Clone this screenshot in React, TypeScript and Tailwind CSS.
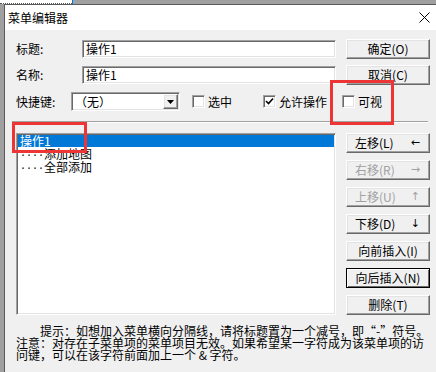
import React from 'react';

const sunken =
  'border border-t-[#a0a0a0] border-l-[#a0a0a0] border-b-white border-r-white shadow-[inset_1px_1px_0_#696969,inset_-1px_-1px_0_#e3e3e3]';
const raised =
  'border border-t-white border-l-white border-b-[#696969] border-r-[#696969] shadow-[inset_-1px_-1px_0_#a0a0a0,inset_1px_1px_0_#e3e3e3]';

function Button({
  label,
  arrow,
  disabled = false,
  focused = false,
}: {
  label: string;
  arrow?: string;
  disabled?: boolean;
  focused?: boolean;
}) {
  return (
    <div
      className={`h-[20px] w-[84px] flex items-center bg-[#f0f0f0] ${
        focused ? 'border border-black shadow-[inset_1px_1px_0_white,inset_-1px_-1px_0_#696969]' : raised
      } ${arrow ? 'justify-between pl-[8px] pr-[9px]' : 'justify-center'} ${
        disabled ? 'text-[#a0a0a0]' : 'text-black'
      }`}
    >
      <span>{label}</span>
      {arrow && <span className="font-['DejaVu_Sans',sans-serif] text-[11px]">{arrow}</span>}
    </div>
  );
}

function CheckBox({ label, checked = false }: { label: string; checked?: boolean }) {
  return (
    <div className="flex items-center gap-[3px]">
      <div className={`w-[13px] h-[13px] bg-white flex items-center justify-center ${sunken}`}>
        {checked && (
          <svg width="9" height="9" viewBox="0 0 9 9">
            <path d="M1 4 L3.5 6.5 L8 1.5" stroke="#000" strokeWidth="1.6" fill="none" />
          </svg>
        )}
      </div>
      <span>{label}</span>
    </div>
  );
}

export default function App() {
  return (
    <div className="relative w-[436px] h-[372px] overflow-hidden bg-[#a0a0a0] text-[12px] leading-[14px] text-black font-['Noto_Sans_CJK_SC',sans-serif]">
      {/* desktop strip above the dialog */}
      <div className="h-[4px] flex">
        <div className="w-[72px] bg-white border-b border-dotted border-[#555]" />
        <div className="w-[1px] bg-[#0078d7]" />
      </div>

      <div className="flex">
        <div className="w-[4px]" />
        <div className="flex-1 h-[368px] flex flex-col bg-[#f0f0f0] border-l border-t border-[#5a5a5a]">
          {/* title bar */}
          <div className="h-[25px] bg-white flex items-center justify-between pl-[3px] pr-[6px]">
            <span className="text-[12px]">菜单编辑器</span>
            <svg width="11" height="11" viewBox="0 0 11 11">
              <path d="M0.5 0.5 L10.5 10.5 M10.5 0.5 L0.5 10.5" stroke="#000" strokeWidth="1" />
            </svg>
          </div>

          <div className="pl-[11px] pr-[6px] pt-[9px]">
            {/* title */}
            <div className="flex items-center h-[20px]">
              <span className="w-[66px]">标题:</span>
              <div className={`w-[254px] h-[18px] bg-white flex items-center pl-[3px] ${sunken}`}>操作1</div>
              <div className="ml-[10px]">
                <Button label="确定(O)" />
              </div>
            </div>

            {/* name */}
            <div className="flex items-center h-[20px] mt-[6px]">
              <span className="w-[66px]">名称:</span>
              <div className={`w-[254px] h-[18px] bg-white flex items-center pl-[3px] ${sunken}`}>操作1</div>
              <div className="ml-[10px]">
                <Button label="取消(C)" />
              </div>
            </div>

            {/* shortcut + flags */}
            <div className="flex items-center h-[19px] mt-[7px]">
              <span className="w-[55px]">快捷键:</span>
              <div className={`w-[109px] h-[19px] bg-white flex items-center justify-between pl-[3px] pr-[1px] ${sunken}`}>
                <span>（无）</span>
                <div className={`w-[15px] h-[15px] bg-[#f0f0f0] flex items-center justify-center ${raised}`}>
                  <svg width="7" height="4" viewBox="0 0 7 4">
                    <path d="M0 0 H7 L3.5 4 Z" fill="#000" />
                  </svg>
                </div>
              </div>
              <div className="ml-[12px]">
                <CheckBox label="选中" />
              </div>
              <div className="ml-[31px]">
                <CheckBox label="允许操作" checked />
              </div>
              <div className="ml-[15px]">
                <CheckBox label="可视" />
              </div>
            </div>

            {/* separator */}
            <div className="mt-[10px] -ml-[4px] w-[416px] border-t border-[#a0a0a0] border-b border-b-white" />

            {/* list + buttons */}
            <div className="flex mt-[10px]">
              <div className={`w-[320px] h-[182px] bg-white pt-[1px] pl-[1px] pr-[1px] ${sunken}`}>
                <div className="h-[12px] leading-[12px] bg-[#0078d7] text-white pl-[2px]">操作1</div>
                <div className="h-[13px] leading-[13px] pl-[2px] flex items-center">
                  <span className="w-[24px] text-black font-['Liberation_Mono',monospace] text-[10px]">....</span>
                  <span>添加地图</span>
                </div>
                <div className="h-[13px] leading-[13px] pl-[2px] flex items-center">
                  <span className="w-[24px] text-black font-['Liberation_Mono',monospace] text-[10px]">....</span>
                  <span>全部添加</span>
                </div>
              </div>
              <div className="ml-[10px] flex flex-col gap-[7px]">
                <Button label="左移(L)" arrow="←" />
                <Button label="右移(R)" arrow="→" disabled />
                <Button label="上移(U)" arrow="↑" disabled />
                <Button label="下移(D)" arrow="↓" />
                <Button label="向前插入(I)" />
                <Button label="向后插入(N)" focused />
                <Button label="删除(T)" />
              </div>
            </div>

            {/* hint */}
            <div className="mt-[10px] leading-[12px] whitespace-nowrap">
              <div className="pl-[24px]">提示：如想加入菜单横向分隔线，请将标题置为一个减号，即“-”符号。</div>
              <div>注意：对存在子菜单项的菜单项目无效。如果希望某一字符成为该菜单项的访</div>
              <div>问键，可以在该字符前面加上一个 &amp; 字符。</div>
            </div>
          </div>
        </div>
      </div>

      {/* red annotation boxes */}
      <div className="absolute left-[12px] top-[122px] w-[75px] h-[31px] border-[3px] border-[#ee3535]" />
      <div className="absolute left-[330px] top-[80px] w-[64px] h-[45px] border-[3px] border-[#ee3535]" />
    </div>
  );
}
